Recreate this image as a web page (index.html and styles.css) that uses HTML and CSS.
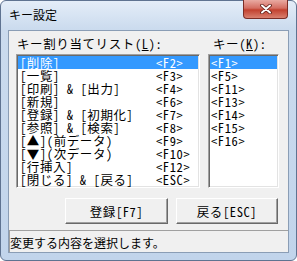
FILE: index.html
```html
<!DOCTYPE html>
<html lang="ja">
<head>
    <meta charset="UTF-8">
    <meta name="viewport" content="width=device-width, initial-scale=1.0">
    <title>キー設定</title>
    <link rel="stylesheet" href="styles.css">
</head>
<body>
    <div class="window">
        <div class="titlebar">
            <span class="title">キー設定</span>
            <button class="close" type="button">
                <svg width="12" height="10" viewBox="0 0 12 10">
                    <path d="M2 1.5 L10 8.5 M10 1.5 L2 8.5" stroke="#5a1a14" stroke-width="3.6" stroke-linecap="round"/>
                    <path d="M2 1.5 L10 8.5 M10 1.5 L2 8.5" stroke="#fff" stroke-width="2" stroke-linecap="round"/>
                </svg>
            </button>
        </div>

        <div class="client">
            <div class="panes">
                <div class="pane pane-list">
                    <div class="label">キー割り当てリスト(<u>L</u>):</div>
                    <ul class="listbox">
                        <li class="selected"><span class="name">[削除]</span><span>&lt;F2&gt;</span></li>
                        <li><span class="name">[一覧]</span><span>&lt;F3&gt;</span></li>
                        <li><span class="name">[印刷] &amp; [出力]</span><span>&lt;F4&gt;</span></li>
                        <li><span class="name">[新規]</span><span>&lt;F6&gt;</span></li>
                        <li><span class="name">[登録] &amp; [初期化]</span><span>&lt;F7&gt;</span></li>
                        <li><span class="name">[参照] &amp; [検索]</span><span>&lt;F8&gt;</span></li>
                        <li><span class="name">[▲](前データ)</span><span>&lt;F9&gt;</span></li>
                        <li><span class="name">[▼](次データ)</span><span>&lt;F10&gt;</span></li>
                        <li><span class="name">[行挿入]</span><span>&lt;F12&gt;</span></li>
                        <li><span class="name">[閉じる] &amp; [戻る]</span><span>&lt;ESC&gt;</span></li>
                    </ul>
                </div>
                <div class="pane pane-keys">
                    <div class="label">キー(<u>K</u>):</div>
                    <ul class="listbox">
                        <li class="selected">&lt;F1&gt;</li>
                        <li>&lt;F5&gt;</li>
                        <li>&lt;F11&gt;</li>
                        <li>&lt;F13&gt;</li>
                        <li>&lt;F14&gt;</li>
                        <li>&lt;F15&gt;</li>
                        <li>&lt;F16&gt;</li>
                    </ul>
                </div>
            </div>

            <div class="buttons">
                <button class="btn btn-save" type="button">登録[F7]</button>
                <button class="btn btn-back" type="button">戻る[ESC]</button>
            </div>

            <div class="status">変更する内容を選択します。</div>
        </div>
    </div>
</body>
</html>
```

FILE: styles.css
```css
body {
    margin: 0;
    padding: 0;
    background-color: #ffffff;
    font-family: "Noto Sans Mono CJK JP", "Noto Sans CJK JP", monospace;
}

.window {
    width: 297px;
    height: 261px;
    box-sizing: border-box;
    border: 1px solid #5f7391;
    border-radius: 6px;
    background: linear-gradient(#e4edf8, #cbdbee 28px, #c1d4eb);
    padding: 0 7px 7px;
    display: flex;
    flex-direction: column;
}

.titlebar {
    height: 29px;
    display: flex;
    justify-content: space-between;
    align-items: flex-start;
}

.title {
    padding: 6px 0 0 1px;
    font: 12px/16px "Noto Sans CJK JP", sans-serif;
    color: #000;
}

.close {
    width: 45px;
    height: 19px;
    margin: -1px 1px 0 0;
    padding: 0;
    border: 1px solid #7b2d26;
    border-top: none;
    border-radius: 0 0 4px 4px;
    background: linear-gradient(#e9aaa2, #d46e62 45%, #c2412f 55%, #d9806f);
    display: flex;
    align-items: center;
    justify-content: center;
}

.client {
    flex: 1;
    background-color: #f0f0f0;
    border: 1px solid #8a9db5;
    display: flex;
    flex-direction: column;
}

.panes {
    display: flex;
    gap: 8px;
    padding: 6px 9px 0 7px;
}

.pane-list {
    width: 184px;
}

.pane-keys {
    width: 71px;
}

.label {
    height: 13px;
    margin-bottom: 4px;
    font-size: 12.5px;
    letter-spacing: 0.6px;
    line-height: 13px;
    white-space: pre;
}

.pane-list .label {
    padding-left: 1px;
}

.pane-keys .label {
    padding-left: 5px;
}

.listbox {
    margin: 0;
    padding: 1px;
    list-style: none;
    height: 134px;
    box-sizing: border-box;
    background-color: #fff;
    border: 1px solid;
    border-color: #a0a0a0 #fff #fff #a0a0a0;
    box-shadow: inset 1px 1px #696969, inset -1px -1px #e3e3e3;
}

.listbox li {
    display: flex;
    height: 13px;
    line-height: 13px;
    font-size: 12.5px;
    letter-spacing: 0.6px;
    padding-left: 1px;
    white-space: pre;
}

.pane-list .listbox li {
    padding-left: 2px;
}

.listbox li.selected {
    background-color: #3399ff;
    color: #fff;
}

.name {
    width: 136px;
    flex: none;
}

.buttons {
    display: flex;
    justify-content: flex-end;
    gap: 8px;
    padding-right: 10px;
    margin-top: 10px;
}

.btn {
    height: 26px;
    padding: 0;
    font-family: inherit;
    font-size: 12.5px;
    letter-spacing: 0.6px;
    color: #000;
    background-color: #f0f0f0;
    border: 1px solid;
    border-color: #fff #696969 #696969 #fff;
    box-shadow: inset -1px -1px #a0a0a0;
}

.btn-save {
    width: 103px;
}

.btn-back {
    width: 102px;
}

.status {
    flex: 1;
    margin-top: 6px;
    padding-top: 4px;
    border-top: 1px solid #a0a0a0;
    border-left: 1px solid #a0a0a0;
    font: 12px/16px "Noto Sans CJK JP", sans-serif;
}
```
